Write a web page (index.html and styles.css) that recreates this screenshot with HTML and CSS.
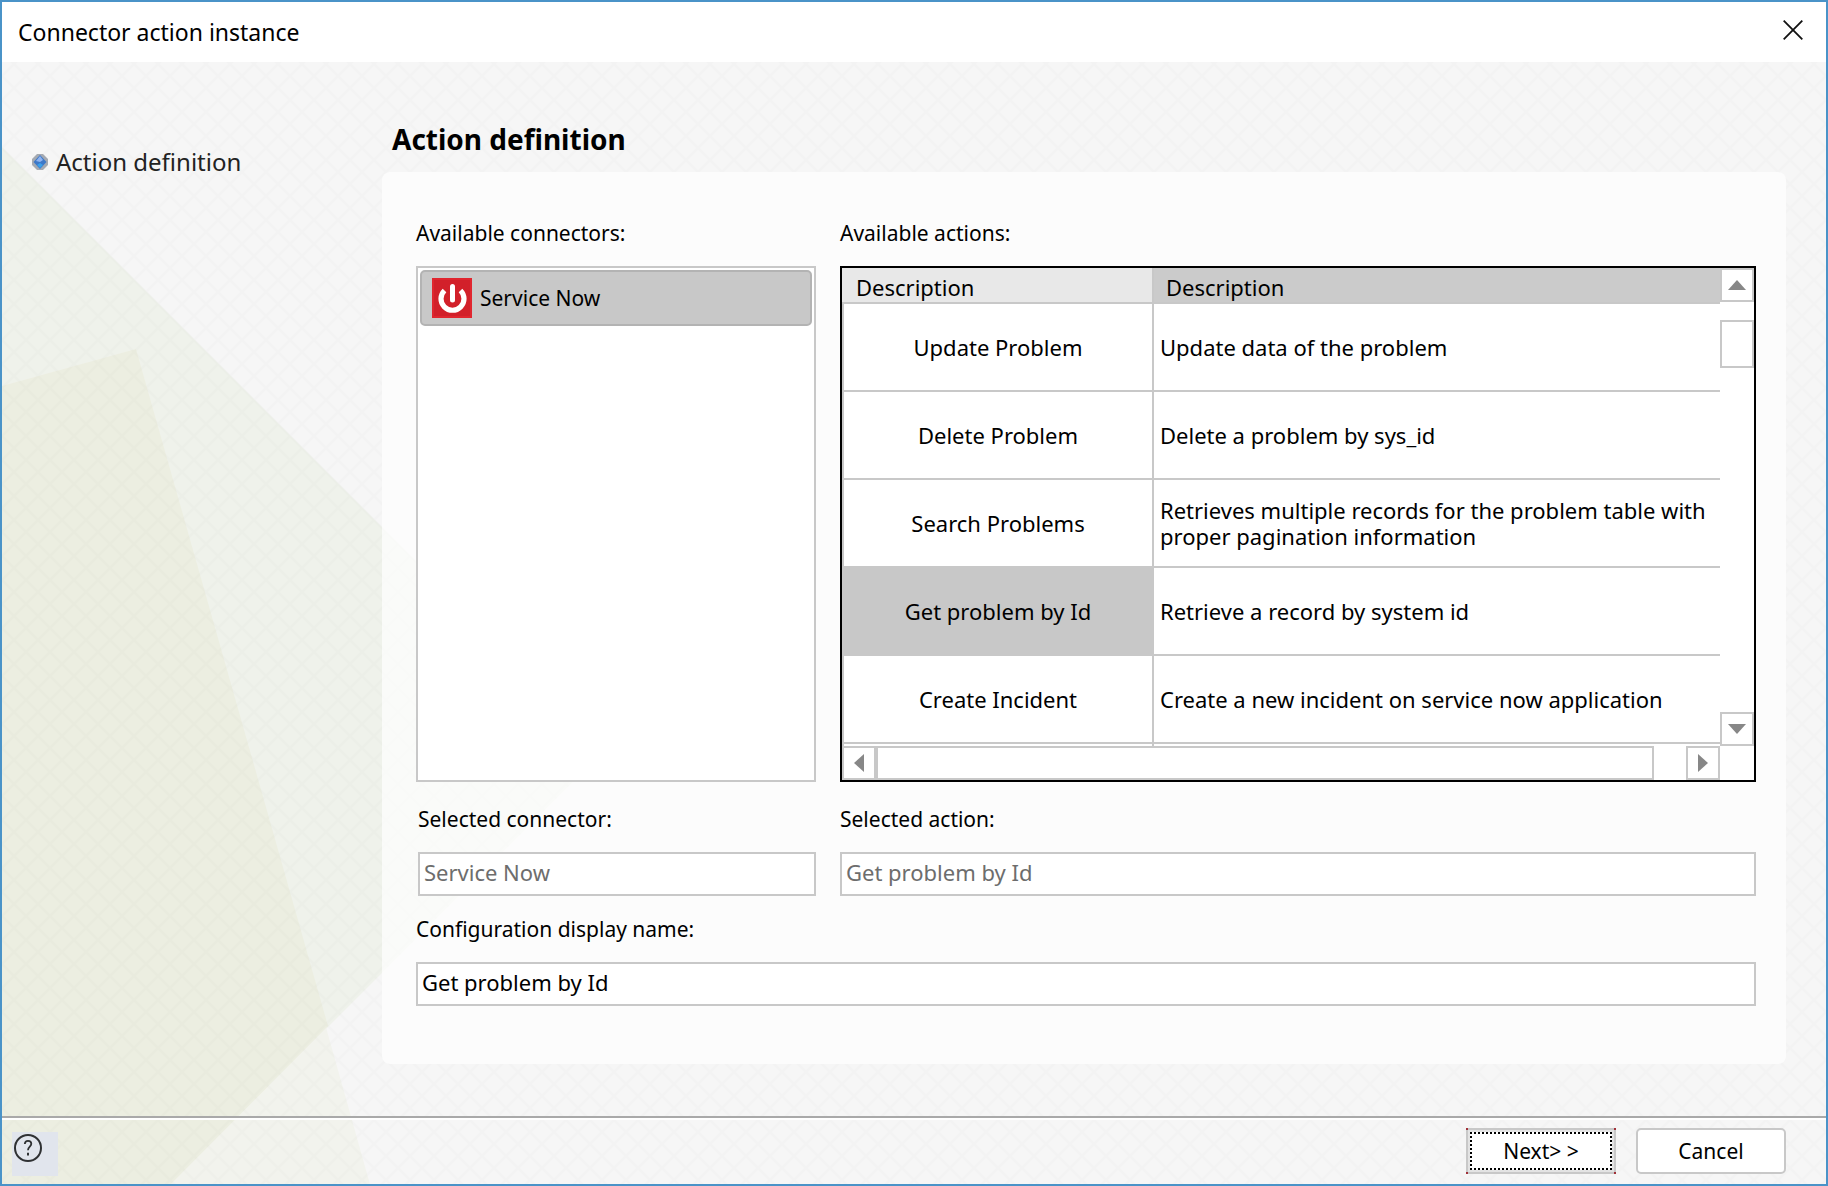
FILE: index.html
```html
<!DOCTYPE html>
<html lang="en">
<head>
<meta charset="utf-8">
<title>Connector action instance</title>
<link rel="stylesheet" href="styles.css">
</head>
<body>
<div class="dialog">
  <svg class="backdrop" aria-hidden="true">
    <defs>
      <pattern id="lattice" x="0" y="2" width="24" height="24" patternUnits="userSpaceOnUse">
        <path d="M-1 -1L25 25M25 -1L-1 25" stroke="#000" stroke-opacity=".013" stroke-width="2" fill="none"/>
      </pattern>
    </defs>
    <path d="M0 145L603 748L165 1186H0Z" fill="#eff2eb"/>
    <path d="M0 384L134 347L369 1186H0Z" fill="#f2f3ed"/>
    <path d="M0 384L134 347L326 1024L165 1186H0Z" fill="#eceee1"/>
    <rect width="100%" height="100%" fill="url(#lattice)"/>
  </svg>

  <header class="titlebar">
    <h1 class="title">Connector action instance</h1>
    <button class="close" type="button" aria-label="Close">
      <svg width="20" height="20" viewBox="0 0 20 20"><path d="M.7.7L19.3 19.3M19.3.7L.7 19.3" stroke="#111" stroke-width="1.8" fill="none"/></svg>
    </button>
  </header>

  <div class="content">
    <nav class="steps">
      <svg class="bullet" width="16" height="16" viewBox="0 0 16 16">
        <path d="M5 0H11L16 5V11L11 16H5L0 11V5Z" fill="#a4a9b1"/>
        <path d="M8 1L14.500 8L8 15L1.500 8Z" fill="#3d78c8"/>
        <path d="M8 2L11 6L8 8L4 7Z" fill="#8fb4f0"/>
        <path d="M8 9L11 11L8 14L5 11Z" fill="#39a0ea"/>
      </svg>
      <span>Action definition</span>
    </nav>

    <main class="page">
      <h2 class="heading">Action definition</h2>
      <form class="panel" id="action-form">
        <section class="field">
          <span class="label" id="connectors-label">Available connectors:</span>
          <ul class="connectors" aria-labelledby="connectors-label">
            <li>
              <button class="connector" type="button">
                <svg width="40" height="40" viewBox="0 0 40 40">
                  <rect width="40" height="40" fill="#e0262f"/>
                  <rect x="2" y="2" width="36" height="36" fill="#d2202a"/>
                  <path d="M12.500 12.500A11.500 11.500 0 1 0 28.500 12.500" stroke="#fff" stroke-width="5.200" fill="none"/>
                  <path d="M20.500 8.500V22" stroke="#fff" stroke-width="5" stroke-linecap="round"/>
                </svg>
                <span>Service Now</span>
              </button>
            </li>
          </ul>
        </section>

        <section class="field">
          <span class="label" id="actions-label">Available actions:</span>
          <div class="actions">
            <table class="table" aria-labelledby="actions-label">
              <thead>
                <tr><th class="name">Description</th><th class="sorted">Description</th></tr>
              </thead>
              <tbody>
                <tr><td class="name">Update Problem</td><td>Update data of the problem</td></tr>
                <tr><td class="name">Delete Problem</td><td>Delete a problem by sys_id</td></tr>
                <tr><td class="name">Search Problems</td><td>Retrieves multiple records for the problem table with proper pagination information</td></tr>
                <tr><td class="name selected">Get problem by Id</td><td>Retrieve a record by system id</td></tr>
                <tr><td class="name">Create Incident</td><td>Create a new incident on service now application</td></tr>
                <tr class="next-row"><td class="name"></td><td></td></tr>
              </tbody>
            </table>
            <div class="vbar">
              <button class="arrow" type="button" aria-label="Scroll up"><svg width="18" height="10" viewBox="0 0 18 10"><path d="M9 0L18 10H0Z" fill="#878787"/></svg></button>
              <div class="vthumb"></div>
              <button class="arrow down" type="button" aria-label="Scroll down"><svg width="18" height="10" viewBox="0 0 18 10"><path d="M0 0H18L9 10Z" fill="#878787"/></svg></button>
            </div>
            <div class="hbar">
              <button class="arrow" type="button" aria-label="Scroll left"><svg width="10" height="18" viewBox="0 0 10 18"><path d="M10 0V18L0 9Z" fill="#878787"/></svg></button>
              <div class="hthumb"></div>
              <button class="arrow" type="button" aria-label="Scroll right"><svg width="10" height="18" viewBox="0 0 10 18"><path d="M0 0L10 9L0 18Z" fill="#878787"/></svg></button>
            </div>
          </div>
        </section>

        <div class="field indented">
          <label class="label" for="selected-connector">Selected connector:</label>
          <input class="input" id="selected-connector" type="text" value="Service Now" disabled>
        </div>
        <div class="field">
          <label class="label" for="selected-action">Selected action:</label>
          <input class="input" id="selected-action" type="text" value="Get problem by Id" disabled>
        </div>
        <div class="field wide">
          <label class="label" for="display-name">Configuration display name:</label>
          <input class="input" id="display-name" type="text" value="Get problem by Id">
        </div>
      </form>
    </main>
  </div>

  <footer class="footer">
    <button class="help" type="button" aria-label="Help">
      <svg width="32" height="32" viewBox="0 0 32 32" fill="none" stroke="#2f3133">
        <circle cx="16" cy="16" r="13" stroke-width="2"/>
        <path d="M12.8 12C13 9.6 14.3 8.8 16 8.8C18 8.8 19.3 9.900 19.3 11.8C19.3 14.6 16 14.8 16 18.2" stroke-width="1.8"/>
        <path d="M16 20.8V23.4" stroke-width="2"/>
      </svg>
    </button>
    <button class="button next" type="submit" form="action-form"><span class="focus">Next&gt; &gt;</span></button>
    <button class="button" type="button">Cancel</button>
  </footer>
</div>
</body>
</html>
```
FILE: styles.css
```css
* {
  box-sizing: border-box;
}

body {
  margin: 0;
  color: #000;
  font-family: "Noto Sans", "Open Sans", sans-serif;
  font-size: 21px;
  line-height: 26px;
}

button,
input {
  font: inherit;
  color: inherit;
}

.dialog {
  position: relative;
  display: flex;
  flex-direction: column;
  min-height: 100vh;
  border: 2px solid #4a93c8;
  background: #f6f6f6;
}

.backdrop {
  position: absolute;
  inset: 0;
  width: 100%;
  height: 100%;
}

.titlebar,
.content,
.footer {
  position: relative;
}

.titlebar {
  display: flex;
  align-items: center;
  justify-content: space-between;
  height: 60px;
  padding: 0 16px;
  background: #fff;
}

.title {
  margin: 0;
  font-size: 23px;
  font-weight: 400;
}

.close {
  display: flex;
  padding: 6px 7px 10px;
  border: 0;
  background: none;
}

.content {
  flex: 1;
  display: flex;
  padding: 58px 40px 52px 0;
}

.steps {
  display: flex;
  align-items: center;
  flex: 0 0 380px;
  gap: 8px;
  height: 32px;
  margin-top: 26px;
  padding-left: 30px;
  color: #222;
  font-size: 24px;
}

.page {
  flex: 1;
  min-width: 0;
}

.heading {
  margin: 0 0 14px;
  padding-left: 10px;
  font-size: 28px;
  line-height: 38px;
}

.panel {
  display: grid;
  grid-template-columns: 400fr 916fr;
  column-gap: 24px;
  padding: 48px 30px 58px 34px;
  border-radius: 8px;
  background: rgba(255, 255, 255, .7);
}

.field {
  display: flex;
  flex-direction: column;
  gap: 20px;
  min-width: 0;
  margin-bottom: 24px;
}

.indented {
  padding-left: 2px;
}

.indented,
.indented + .field {
  margin-bottom: 20px;
}

.wide {
  grid-column: 1 / -1;
  margin-bottom: 0;
}

.connectors {
  flex: 1;
  margin: 0;
  padding: 2px;
  border: 2px solid #c8c8c8;
  background: #fff;
  list-style: none;
}

.connector {
  display: flex;
  align-items: center;
  gap: 8px;
  width: 100%;
  height: 56px;
  padding: 0 10px;
  border: 2px solid #b3b3b3;
  border-radius: 5px;
  background: #c8c8c8;
}

.actions {
  display: grid;
  grid-template-columns: 1fr 34px;
  border: 2px solid #000;
  background: #fff;
}

.table {
  width: 100%;
  border-collapse: separate;
  border-spacing: 0;
  table-layout: fixed;
  font-size: 22px;
}

.table th {
  height: 36px;
  padding: 4px 12px 0;
  border-bottom: 2px solid #c8c8c8;
  font-weight: 400;
  text-align: left;
}

.table th.name {
  width: 312px;
  padding-left: 14px;
  border-right: 2px solid #c8c8c8;
  background: #e8e8e8;
}

.table .sorted {
  background: #cbcbcb;
}

.table td {
  height: 88px;
  padding: 0 6px;
  border-bottom: 2px solid #c8c8c8;
}

.table td.name {
  border-right: 2px solid #c8c8c8;
  border-left: 2px solid #c8c8c8;
  text-align: center;
}

.table .selected {
  background: #c8c8c8;
}

.table .next-row td {
  height: 2px;
  border-bottom: 0;
}

.vbar {
  display: flex;
  flex-direction: column;
}

.arrow {
  display: flex;
  align-items: center;
  justify-content: center;
  flex: none;
  width: 34px;
  height: 34px;
  padding: 0;
  border: 2px solid #c8c8c8;
  background: #fff;
}

.vthumb {
  height: 48px;
  margin-top: 18px;
  border: 2px solid #c8c8c8;
}

.down {
  margin-top: auto;
}

.hbar {
  display: flex;
}

.hthumb {
  flex: 1;
  margin-right: 32px;
  border: 2px solid #c8c8c8;
}

.input {
  width: 100%;
  height: 44px;
  padding: 0 4px 4px;
  border: 2px solid #c8c8c8;
  background: #fff;
  font-size: 22px;
}

.input:disabled {
  color: #6d6d6d;
}

.footer {
  display: flex;
  align-items: flex-start;
  gap: 20px;
  height: 68px;
  padding: 8px 40px 0 10px;
  border-top: 2px solid #a9a9a9;
  box-shadow: inset 0 2px #fff;
}

.help {
  display: flex;
  width: 46px;
  height: 44px;
  margin: 6px auto 0 0;
  padding: 0;
  border: 0;
  background: #e1e5ed;
}

.button {
  width: 150px;
  height: 46px;
  margin-top: 2px;
  padding: 0;
  border: 2px solid #c8c8c8;
  border-radius: 5px;
  background: #fff;
}

/* Default button: grey frame with a red mark at each corner. */
.next {
  padding: 2px;
  border-color: transparent;
  border-radius: 0;
  background:
    linear-gradient(#a03038, #a03038) left top / 2px 2px no-repeat border-box,
    linear-gradient(#a03038, #a03038) right top / 2px 2px no-repeat border-box,
    linear-gradient(#a03038, #a03038) left bottom / 2px 2px no-repeat border-box,
    linear-gradient(#a03038, #a03038) right bottom / 2px 2px no-repeat border-box,
    linear-gradient(#e3e3e3, #e3e3e3) padding-box,
    linear-gradient(#c8c8c8, #c8c8c8) border-box;
}

.focus {
  display: flex;
  align-items: center;
  justify-content: center;
  height: 100%;
  border: 2px dotted #000;
  background: #fff;
}
```
